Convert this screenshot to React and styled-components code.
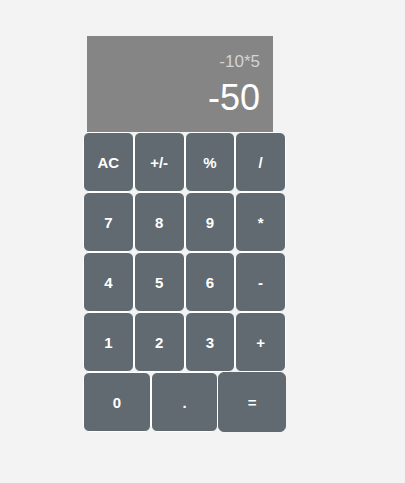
import React from "react";
import styled, { createGlobalStyle } from "styled-components";

const Global = createGlobalStyle`
  html, body {
    margin: 0;
    padding: 0;
    background: #f3f3f3;
    font-family: "Liberation Sans", Arial, sans-serif;
  }
`;

const Page = styled.div`
  padding: 36px 0 0 83px;
`;

const Calculator = styled.div`
  width: 203px;
  display: flex;
  flex-direction: column;
`;

const Display = styled.div`
  margin-left: 4px;
  width: 186px;
  height: 96px;
  box-sizing: border-box;
  background: #858585;
  padding: 17px 13px 0 0;
  display: flex;
  flex-direction: column;
  align-items: flex-end;
  gap: 10px;
`;

const Expression = styled.div`
  font-size: 17px;
  line-height: 17px;
  color: #d4d4d4;
`;

const Result = styled.div`
  font-size: 36px;
  line-height: 36px;
  color: #ffffff;
`;

const Keypad = styled.div`
  display: grid;
  grid-template-columns: repeat(12, 1fr);
  grid-auto-rows: 60px;
`;

const Key = styled.button`
  grid-column: span ${(p) => p.$span || 3};
  box-sizing: border-box;
  margin: 0;
  padding: 0;
  background: #606a70;
  border: 1px solid ${(p) => (p.$solid ? "#606a70" : "#ffffff")};
  border-radius: 6px;
  color: #ffffff;
  font-family: "Liberation Sans", Arial, sans-serif;
  font-size: 15px;
  font-weight: 700;
  display: flex;
  align-items: center;
  justify-content: center;
  cursor: pointer;
`;

const rows = [
  ["AC", "+/-", "%", "/"],
  ["7", "8", "9", "*"],
  ["4", "5", "6", "-"],
  ["1", "2", "3", "+"],
];

export default function App() {
  return (
    <>
      <Global />
      <Page>
        <Calculator>
          <Display>
            <Expression>-10*5</Expression>
            <Result>-50</Result>
          </Display>
          <Keypad>
            {rows.flat().map((k, i) => (
              <Key key={i}>{k}</Key>
            ))}
            <Key $span={4}>0</Key>
            <Key $span={4}>.</Key>
            <Key $span={4} $solid>
              =
            </Key>
          </Keypad>
        </Calculator>
      </Page>
    </>
  );
}
